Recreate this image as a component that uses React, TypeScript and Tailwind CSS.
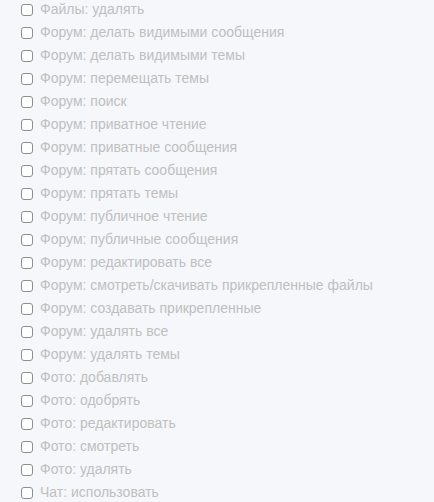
import React from "react";

const items = [
  "Файлы: удалять",
  "Форум: делать видимыми сообщения",
  "Форум: делать видимыми темы",
  "Форум: перемещать темы",
  "Форум: поиск",
  "Форум: приватное чтение",
  "Форум: приватные сообщения",
  "Форум: прятать сообщения",
  "Форум: прятать темы",
  "Форум: публичное чтение",
  "Форум: публичные сообщения",
  "Форум: редактировать все",
  "Форум: смотреть/скачивать прикрепленные файлы",
  "Форум: создавать прикрепленные",
  "Форум: удалять все",
  "Форум: удалять темы",
  "Фото: добавлять",
  "Фото: одобрять",
  "Фото: редактировать",
  "Фото: смотреть",
  "Фото: удалять",
  "Чат: использовать",
];

export default function App() {
  return (
    <div className="w-[434px] h-[502px] overflow-hidden bg-[#f5f7fb]" style={{ fontFamily: '"Liberation Sans", Arial, sans-serif' }}>
      <div className="flex flex-col pl-[21px] -mt-[2px]">
        {items.map((t) => (
          <label key={t} className="flex items-center h-[23px] gap-[7px] text-[14px] text-[#bfbfbf]">
            <span className="w-[12px] h-[12px] rounded-[3px] border border-[#8e8e8e] bg-white shrink-0" />
            <span>{t}</span>
          </label>
        ))}
      </div>
    </div>
  );
}
